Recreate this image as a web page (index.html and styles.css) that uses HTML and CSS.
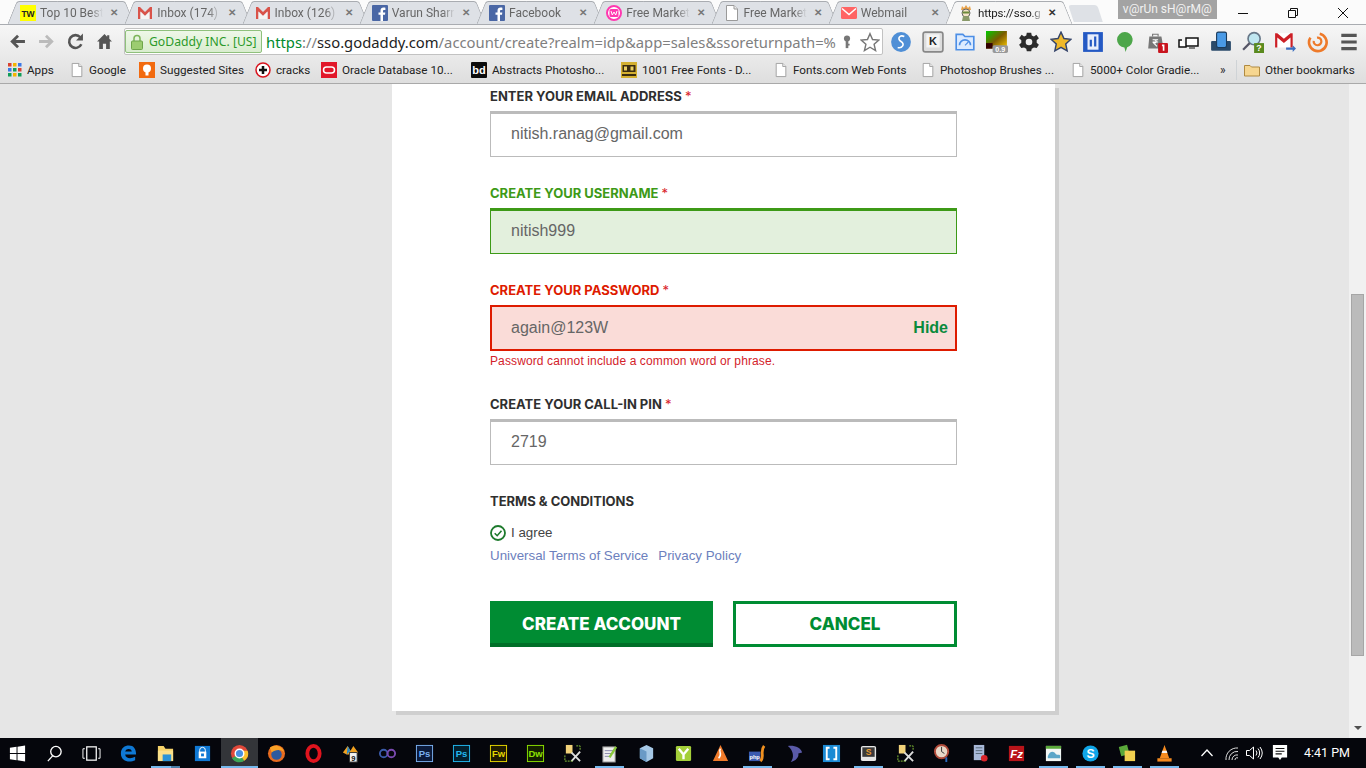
FILE: index.html
```html
<!DOCTYPE html>
<html lang="en">
<head>
    <meta charset="UTF-8">
    <meta name="viewport" content="width=device-width, initial-scale=1.0">
    <title>Create Account</title>
    <link rel="stylesheet" href="styles.css">
</head>
<body>
    <svg class="sprites" width="0" height="0">
        <symbol id="doc" viewBox="0 0 16 16"><path d="M2.5 .5H10L13.5 4V15.5H2.500Z" fill="#fff" stroke="#9a9a9a"/><path d="M10 .5V4H13.500" fill="#eee" stroke="#9a9a9a"/></symbol>
        <symbol id="gmail" viewBox="0 0 16 16"><path d="M1 2H3L8 7 13 2H15V14H12.500V6.500L8 11 3.500 6.500V14H1Z" fill="#d9534a"/><path d="M3.500 6.500V14H12.500V6.500L8 11Z" fill="#f4f4f4"/></symbol>
        <symbol id="fb" viewBox="0 0 16 16"><rect width="16" height="16" rx="1" fill="#4a67a5"/><path d="M11 16V9.800H13L13.300 7.400H11V6C11 5.300 11.300 4.900 12.100 4.900H13.400V2.700C13 2.600 12.300 2.600 11.500 2.600 9.700 2.600 8.500 3.700 8.500 5.700V7.400H6.500V9.800H8.500V16Z" fill="#fff"/></symbol>
    </svg>

    <div class="browser">
        <!-- tabs -->
        <div class="tabstrip">
            <div class="tab"><svg class="favicon" viewBox="0 0 16 16"><rect width="16" height="16" fill="#ff0"/><text x="8" y="11.500" text-anchor="middle" class="tw">TW</text></svg><span class="tab-title">Top 10 Best</span><span class="tab-x">✕</span></div>
            <div class="tab"><svg class="favicon"><use href="#gmail"/></svg><span class="tab-title">Inbox (174)</span><span class="tab-x">✕</span></div>
            <div class="tab"><svg class="favicon"><use href="#gmail"/></svg><span class="tab-title">Inbox (126)</span><span class="tab-x">✕</span></div>
            <div class="tab"><svg class="favicon"><use href="#fb"/></svg><span class="tab-title">Varun Sharr</span><span class="tab-x">✕</span></div>
            <div class="tab"><svg class="favicon"><use href="#fb"/></svg><span class="tab-title">Facebook</span><span class="tab-x">✕</span></div>
            <div class="tab"><svg class="favicon" viewBox="0 0 16 16"><circle cx="8" cy="8" r="7" fill="#fff" stroke="#ff38b0" stroke-width="2"/><rect x="3.500" y="4" width="9" height="8" rx="1.500" fill="#ff38b0"/><path d="M5 6 6.300 10 8 7 9.700 10 11 6" fill="none" stroke="#fff"/></svg><span class="tab-title">Free Market</span><span class="tab-x">✕</span></div>
            <div class="tab"><svg class="favicon"><use href="#doc"/></svg><span class="tab-title">Free Market</span><span class="tab-x">✕</span></div>
            <div class="tab"><svg class="favicon" viewBox="0 0 16 16"><rect y="2" width="16" height="12" rx="1.500" fill="#ff6464"/><path d="M1 3.500 8 9.500 15 3.500" fill="none" stroke="#fff" stroke-width="1.500"/></svg><span class="tab-title">Webmail</span><span class="tab-x">✕</span></div>
            <div class="tab tab-active"><svg class="favicon" viewBox="0 0 16 16"><path d="M3 5 4 1 6 3 8 0 10 3 12 1 13 5Z" fill="#e8a24a"/><circle cx="8" cy="8" r="4" fill="#f3e3c8" stroke="#666"/><rect x="4.500" y="6.500" width="7" height="2" fill="#6a8a3a"/><path d="M5 11 4 16H12L11 11Z" fill="#8a9a6a"/></svg><span class="tab-title">https://sso.g</span><span class="tab-x">✕</span></div>
            <div class="new-tab"></div>
            <div class="profile">v@rUn sH@rM@</div>
            <div class="win-controls">
                <svg class="win-btn" viewBox="0 0 12 12"><path d="M1 6.500H11" stroke="#111"/></svg>
                <svg class="win-btn" viewBox="0 0 12 12"><path d="M1.500 3.500H8.500V10.500H1.500Z M3.500 3.500V1.500H10.500V8.500H8.500" fill="none" stroke="#111"/></svg>
                <svg class="win-btn" viewBox="0 0 12 12"><path d="M1 1 11 11M11 1 1 11" stroke="#111"/></svg>
            </div>
        </div>

        <!-- address bar -->
        <div class="toolbar">
            <div class="nav-btn"><svg viewBox="0 0 16 16"><path d="M15 8H4M8.500 2.500 3 8 8.500 13.500" fill="none" stroke="#555" stroke-width="2.600"/></svg></div>
            <div class="nav-btn"><svg viewBox="0 0 16 16"><path d="M1 8H12M7.500 2.500 13 8 7.500 13.500" fill="none" stroke="#bbb" stroke-width="2.600"/></svg></div>
            <div class="nav-btn"><svg viewBox="0 0 16 16"><path d="M13.500 10.500A6 6 0 1 1 12.500 4" fill="none" stroke="#555" stroke-width="2.400"/><path d="M15 .5V7H8.500Z" fill="#555"/></svg></div>
            <div class="nav-btn"><svg viewBox="0 0 16 16"><path d="M8 1 1 8H3V15H6.500V10H9.500V15H13V8H15L12.500 5.500V2H10.500V3.500Z" fill="#555"/></svg></div>
            <div class="omnibox">
                <div class="ev-chip">
                    <svg class="ev-lock" viewBox="0 0 12 16"><path d="M3 8V4.500A3 3 0 0 1 9 4.500V8" fill="none" stroke="#7cb45a" stroke-width="1.500"/><rect x=".5" y="7" width="11" height="8.500" rx="1" fill="#9ccc70" stroke="#6ea54a"/></svg>
                    <span>GoDaddy INC. [US]</span>
                </div>
                <div class="url"><span class="url-scheme">https</span>://<span class="url-host">sso.godaddy.com</span>/account/create?realm=idp&amp;app=sales&amp;ssoreturnpath=%</div>
                <svg class="omni-icon" viewBox="0 0 16 16"><circle cx="8" cy="4" r="3.500" fill="#777"/><rect x="6.500" y="6" width="3" height="9" fill="#777"/><rect x="9" y="10" width="2" height="2" fill="#777"/></svg>
                <svg class="omni-icon omni-star" viewBox="0 0 18 18"><path d="M9 1.500 11.300 6.800 17 7.300 12.700 11.100 14 16.700 9 13.700 4 16.700 5.300 11.100 1 7.300 6.700 6.800Z" fill="#fff" stroke="#777" stroke-width="1.300"/></svg>
            </div>
            <div class="extensions">
                <div class="ext"><svg viewBox="0 0 20 20"><circle cx="10" cy="10" r="9" fill="#4f8fd6"/><path d="M13 5C9 3 6 7 10 9.500S11 16 7 15" fill="none" stroke="#fff" stroke-width="1.500"/></svg></div>
                <div class="ext"><svg viewBox="0 0 20 20"><rect x="1" y="1" width="18" height="18" rx="2" fill="#ddd" stroke="#888" stroke-width="1.500"/><rect x="4" y="3" width="12" height="12" fill="#f4f4f4"/><text x="10" y="13" text-anchor="middle" class="ext-k">K</text></svg></div>
                <div class="ext"><svg viewBox="0 0 20 20"><path d="M2 3H8L10 5H18V17H2Z" fill="#dcebff" stroke="#4d8fe6" stroke-width="1.500"/><path d="M5 13A5 5 0 0 1 15 13" fill="none" stroke="#4d8fe6" stroke-width="1.500"/><path d="M10 13 13 10" stroke="#4d8fe6"/></svg></div>
                <div class="ext"><svg viewBox="0 0 20 20"><defs><linearGradient id="cg" x1="0" y1="0" x2="1" y2="1"><stop offset="0" stop-color="#0c0"/><stop offset=".5" stop-color="#7a5a00"/><stop offset="1" stop-color="#fc0"/></linearGradient></defs><rect y="0" width="19" height="16" fill="url(#cg)"/><rect x="0" y="11" width="6" height="5" fill="#300"/><rect x="6" y="13" width="14" height="7" rx="1.500" fill="#999"/><text x="13" y="19" text-anchor="middle" class="ext-num">0.9</text></svg></div>
                <div class="ext"><svg viewBox="0 0 20 20"><path d="M8 1H12L12.500 3.500 14.500 4.400 16.700 3 19 6 17 7.800V10.200L19 12 17 15 14.500 14.600 12.500 15.700 12 18H8L7.500 15.700 5.500 14.600 3 15 1 12 3 10.200V7.800L1 6 3.300 3 5.500 4.400 7.500 3.500Z" fill="#2b2b2b" transform="translate(0 .5)"/><circle cx="10" cy="10" r="3" fill="#eee"/></svg></div>
                <div class="ext"><svg viewBox="0 0 20 20"><path d="M10 1 12.700 6.800 19 7.500 14.300 11.800 15.600 18 10 14.900 4.400 18 5.700 11.800 1 7.500 7.300 6.800Z" fill="#f0b92a" stroke="#34446a" stroke-width="1.300"/></svg></div>
                <div class="ext"><svg viewBox="0 0 20 20"><rect x="1" y="1" width="18" height="18" fill="#2459c4"/><rect x="5" y="3" width="10" height="14" fill="#e8eefc"/><path d="M8 14V8M12 5V14" stroke="#2459c4" stroke-width="2"/></svg></div>
                <div class="ext"><svg viewBox="0 0 20 20"><path d="M10 1A7 7 0 0 1 12 14.700L10.500 19 9.500 15A7 7 0 0 1 10 1Z" fill="#4da64a"/></svg></div>
                <div class="ext"><svg viewBox="0 0 20 20"><path d="M3 5H14L16 16H2Z" fill="#777"/><path d="M6 5V3H11V5" fill="none" stroke="#777"/><path d="M6 8H11M6 10H11M7 8C10 8 10 11 7 11L10 14" fill="none" stroke="#fff"/><rect x="11" y="11" width="9" height="9" rx="1" fill="#c8141e"/><path d="M14.500 13H16V18" fill="none" stroke="#fff" stroke-width="1.500"/></svg></div>
                <div class="ext"><svg viewBox="0 0 22 20"><path d="M4 8H1V15H8V6H20V14H8" fill="#fff" stroke="#111" stroke-width="1.500"/><path d="M11 16H17" stroke="#111"/></svg></div>
                <div class="ext"><svg viewBox="0 0 20 20"><rect x="1" y="9" width="18" height="9" rx="1" fill="#2a4a6a"/><rect x="6" y="1" width="9" height="14" rx="1.500" fill="#4a9ae6" stroke="#1a3a5a"/></svg></div>
                <div class="ext"><svg viewBox="0 0 20 20"><circle cx="11" cy="7" r="5.500" fill="#bfe6f0" stroke="#678" stroke-width="1.500"/><path d="M7 11 1 17" stroke="#556" stroke-width="2"/><rect x="11" y="11" width="9" height="9" fill="#5a8a1e"/><text x="15.500" y="18.500" text-anchor="middle" class="ext-q">?</text></svg></div>
                <div class="ext"><svg viewBox="0 0 20 20"><rect x="1" y="2" width="16" height="13" fill="#fff"/><path d="M1 2H3L9 7 15 2H17V15H15V6L9 11 3 6V15H1Z" fill="#cc1f26"/><path d="M11 15H17V13L20 16 17 19V17H11Z" fill="#3a6ec0"/></svg></div>
                <div class="ext"><svg viewBox="0 0 20 20"><path d="M12.500 2.500A8 8 0 1 1 4 6" fill="none" stroke="#ee7a2a" stroke-width="2.400"/><path d="M7 9A3.500 3.500 0 1 0 10 6" fill="none" stroke="#ee7a2a" stroke-width="2"/></svg></div>
                <div class="ext"><svg viewBox="0 0 20 20"><path d="M3 4H17M3 10H17M3 16H17" stroke="#555" stroke-width="2.800"/></svg></div>
            </div>
        </div>

        <!-- bookmarks -->
        <div class="bookmarks">
            <div class="bm"><svg class="bm-icon" viewBox="0 0 14 14"><g fill="#d9412f"><rect width="3.500" height="3.500"/><rect x="10" width="3.500" height="3.500" fill="#3b78e7"/><rect x="5" width="3.500" height="3.500" fill="#f4b400"/><rect y="5" width="3.500" height="3.500" fill="#3b78e7"/><rect x="5" y="5" width="3.500" height="3.500" fill="#0f9d58"/><rect x="10" y="5" width="3.500" height="3.500"/><rect y="10" width="3.500" height="3.500" fill="#0f9d58"/><rect x="5" y="10" width="3.500" height="3.500" fill="#f4b400"/><rect x="10" y="10" width="3.500" height="3.500" fill="#0f9d58"/></g></svg>Apps</div>
            <div class="bm"><svg class="bm-icon"><use href="#doc"/></svg>Google</div>
            <div class="bm"><svg class="bm-icon bm-wide" viewBox="0 0 16 16"><rect width="16" height="16" fill="#f26a0f"/><circle cx="8" cy="6.500" r="4" fill="#fff"/><rect x="6.500" y="10" width="3" height="3.500" fill="#fff"/></svg>Suggested Sites</div>
            <div class="bm"><svg class="bm-icon bm-wide" viewBox="0 0 16 16"><circle cx="8" cy="8" r="7" fill="#fff" stroke="#d8141e" stroke-width="1.500"/><path d="M8 4V12M4 8H12" stroke="#111" stroke-width="2.500"/></svg>cracks</div>
            <div class="bm"><svg class="bm-icon bm-wide" viewBox="0 0 16 16"><rect width="16" height="16" fill="#e2172a"/><rect x="2.500" y="5" width="11" height="6" rx="3" fill="none" stroke="#fff" stroke-width="1.500"/></svg>Oracle Database 10...</div>
            <div class="bm"><svg class="bm-icon bm-wide" viewBox="0 0 16 16"><rect width="16" height="16" rx="1" fill="#0c0c0c"/><text x="8" y="12" text-anchor="middle" class="bd">bd</text></svg>Abstracts Photosho...</div>
            <div class="bm"><svg class="bm-icon bm-wide" viewBox="0 0 16 16"><rect width="16" height="16" fill="#d4b030"/><rect x="1.500" y="3" width="13" height="7" fill="#3a2c10"/><rect x="3" y="4.500" width="3" height="4" fill="#ecd060"/><rect x="9.500" y="4.500" width="3" height="4" fill="#ecd060"/><rect x="1" y="12" width="14" height="2" fill="#3a2c10"/></svg>1001 Free Fonts - D...</div>
            <div class="bm"><svg class="bm-icon"><use href="#doc"/></svg>Fonts.com Web Fonts</div>
            <div class="bm"><svg class="bm-icon"><use href="#doc"/></svg>Photoshop Brushes ...</div>
            <div class="bm"><svg class="bm-icon"><use href="#doc"/></svg>5000+ Color Gradie...</div>
            <div class="bm-more">»</div>
            <div class="bm-sep"></div>
            <div class="bm"><svg class="bm-icon bm-wide" viewBox="0 0 16 16"><path d="M.5 3.500H6L7.500 5H15.500V14H.5Z" fill="#f6d690" stroke="#b08a40"/></svg>Other bookmarks</div>
        </div>

        <!-- page -->
        <div class="viewport">
            <main class="page">
                <form class="card">
                    <div class="field">
                        <label class="field-label">ENTER YOUR EMAIL ADDRESS <span class="req">*</span></label>
                        <div class="field-box">nitish.ranag@gmail.com</div>
                    </div>
                    <div class="field is-valid">
                        <label class="field-label">CREATE YOUR USERNAME <span class="req">*</span></label>
                        <div class="field-box">nitish999</div>
                    </div>
                    <div class="field is-error">
                        <label class="field-label">CREATE YOUR PASSWORD <span class="req">*</span></label>
                        <div class="field-box">again@123W<span class="hide-link">Hide</span></div>
                        <div class="field-error">Password cannot include a common word or phrase.</div>
                    </div>
                    <div class="field">
                        <label class="field-label">CREATE YOUR CALL-IN PIN <span class="req">*</span></label>
                        <div class="field-box">2719</div>
                    </div>
                    <div class="terms">
                        <div class="field-label">TERMS &amp; CONDITIONS</div>
                        <div class="agree">
                            <svg class="check" viewBox="0 0 16 16"><circle cx="8" cy="8" r="7" fill="#fff" stroke="#1d7a2c" stroke-width="1.800"/><path d="M4.700 8.200 7.200 10.700 11.500 5.800" fill="none" stroke="#1d7a2c" stroke-width="1.600"/></svg>
                            I agree
                        </div>
                        <div class="terms-links"><a>Universal Terms of Service</a><a>Privacy Policy</a></div>
                    </div>
                    <div class="actions">
                        <div class="btn btn-primary">CREATE ACCOUNT</div>
                        <div class="btn btn-outline">CANCEL</div>
                    </div>
                </form>
            </main>
            <div class="scrollbar">
                <div class="scroll-thumb"></div>
                <div class="scroll-down"></div>
            </div>
        </div>

        <!-- windows taskbar -->
        <footer class="taskbar">
            <div class="task"><svg viewBox="0 0 20 20"><path d="M2 4 9 3V9.500H2ZM10 2.800 18 1.500V9.500H10ZM2 10.500H9V17L2 16ZM10 10.500H18V18.500L10 17.200Z" fill="#fff"/></svg></div>
            <div class="task"><svg viewBox="0 0 20 20"><circle cx="11.500" cy="8" r="5.500" fill="none" stroke="#fff" stroke-width="1.400"/><path d="M8 12.500 3 18" stroke="#fff" stroke-width="1.400"/></svg></div>
            <div class="task"><svg viewBox="0 0 20 20"><rect x="5" y="3" width="10" height="14" fill="none" stroke="#fff" stroke-width="1.300"/><path d="M3 5H1V15H3M17 5H19V15H17" fill="none" stroke="#fff"/></svg></div>
            <div class="task"><svg viewBox="0 0 20 20"><path d="M2 10C2 4 6 1.500 10.500 1.500 15.500 1.500 18 5 18 11H6.500C7 15.500 12.500 16 17 13.500V17C11 20 2 18.500 2 10ZM6.500 8H13.500C13 4.500 7.500 4.500 6.500 8Z" fill="#0f78d4"/></svg></div>
            <div class="task task-open task-split"><svg viewBox="0 0 20 20"><path d="M2 2H8L10 5H18V18H2Z" fill="#f6d26a"/><rect x="2" y="7" width="16" height="11" fill="#fbe08a"/><rect x="7" y="11" width="9" height="7" fill="#2a93d8"/></svg></div>
            <div class="task"><svg viewBox="0 0 20 20"><rect x="2" y="2" width="16" height="16" fill="#0f78d4"/><path d="M7 9V6.500A3 3 0 0 1 13 6.500V9" fill="none" stroke="#fff"/><rect x="6" y="8" width="8" height="7" fill="#fff"/><rect x="8.500" y="10" width="3" height="3" fill="#0f78d4"/></svg></div>
            <div class="task task-active"><svg viewBox="0 0 20 20"><circle cx="10" cy="10" r="9" fill="#e0483a"/><path d="M10 10 2 15A9 9 0 0 0 15 17.500Z" fill="#3aa757"/><path d="M10 10 15 17.500A9 9 0 0 0 18.500 7H10Z" fill="#fbc02d"/><circle cx="10" cy="10" r="4.500" fill="#4a90e2" stroke="#fff" stroke-width="1.500"/></svg></div>
            <div class="task"><svg viewBox="0 0 20 20"><circle cx="10" cy="10" r="9" fill="#e86b1f"/><circle cx="10" cy="11" r="5.500" fill="#2c5aa0"/><path d="M3 4C8 0 17 2 18 9 15 5 8 6 5 9Z" fill="#f9a227"/></svg></div>
            <div class="task"><svg viewBox="0 0 20 20"><ellipse cx="10" cy="10" rx="6.500" ry="8" fill="none" stroke="#e0141e" stroke-width="4"/></svg></div>
            <div class="task"><svg viewBox="0 0 20 20"><path d="M2 9 7 2 10 7 13 2 18 9 14 11H6Z" fill="#f0a020"/><path d="M7 2 10 7 6 11Z" fill="#2a8ac8"/><rect x="9" y="9" width="8" height="10" fill="#f2f2f2" stroke="#333"/><text x="13" y="17.500" text-anchor="middle" class="tile-num">9</text></svg></div>
            <div class="task"><svg viewBox="0 0 20 20"><circle cx="6" cy="10" r="4" fill="none" stroke="#3a5aa8" stroke-width="2"/><circle cx="14" cy="10" r="4" fill="none" stroke="#7a4ab0" stroke-width="2"/></svg></div>
            <div class="task"><svg viewBox="0 0 20 20"><rect x="1.500" y="1.500" width="17" height="17" fill="#0b1a3a" stroke="#7ab0f0"/><text x="10" y="14" text-anchor="middle" class="tile-ps">Ps</text></svg></div>
            <div class="task"><svg viewBox="0 0 20 20"><rect x="1.500" y="1.500" width="17" height="17" fill="#03202e" stroke="#22b8f0"/><text x="10" y="14" text-anchor="middle" class="tile-ps2">Ps</text></svg></div>
            <div class="task"><svg viewBox="0 0 20 20"><rect x="1.500" y="1.500" width="17" height="17" fill="#201c00" stroke="#e6d800"/><text x="10" y="14" text-anchor="middle" class="tile-fw">Fw</text></svg></div>
            <div class="task"><svg viewBox="0 0 20 20"><rect x="1.500" y="1.500" width="17" height="17" fill="#142000" stroke="#8ce000"/><text x="10" y="14" text-anchor="middle" class="tile-dw">Dw</text></svg></div>
            <div class="task"><svg viewBox="0 0 20 20"><rect x="3" y="1" width="7" height="9" fill="#f2d27a"/><path d="M9 9 18 18M18 8 9 18" stroke="#ddd" stroke-width="2"/><path d="M2 18H10M2 12V18M14 2H18V6" fill="none" stroke="#8ac83a" stroke-dasharray="2 1"/></svg></div>
            <div class="task task-open"><svg viewBox="0 0 20 20"><rect x="3" y="3" width="13" height="16" fill="#eee" stroke="#888"/><path d="M5 7H14M5 10H14M5 13H11" stroke="#88a"/><path d="M10 14 17 3" stroke="#8ac83a" stroke-width="2.500"/></svg></div>
            <div class="task"><svg viewBox="0 0 20 20"><path d="M10 1 17 4.500V15L10 19 3 15V4.500Z" fill="#a6c8e6"/><path d="M10 8V19L3 15V4.500Z" fill="#6a9ac6"/></svg></div>
            <div class="task"><svg viewBox="0 0 20 20"><rect x="2" y="2" width="16" height="16" rx="1.500" fill="#a4cf3a"/><path d="M5 5 10 11 15 5M10 11V16" stroke="#fff" stroke-width="2.500" fill="none"/></svg></div>
            <div class="task"><svg viewBox="0 0 20 20"><path d="M10 1 18 18H2Z" fill="#f07a2a"/><path d="M10 5C7 8 13 10 8 15" fill="none" stroke="#fff" stroke-width="1.600"/></svg></div>
            <div class="task task-open"><svg viewBox="0 0 20 20"><rect x="1" y="8" width="12" height="10" fill="#3a5ab0"/><text x="7" y="16" text-anchor="middle" class="tile-php">php</text><path d="M13 18C18 14 12 8 17 2" fill="none" stroke="#f09020" stroke-width="3"/></svg></div>
            <div class="task"><svg viewBox="0 0 20 20"><path d="M3 2C10 1 17 4 18 9L14 10C15 14 11 18 6 19 10 14 9 7 3 2Z" fill="#5a5aa8"/></svg></div>
            <div class="task"><svg viewBox="0 0 20 20"><rect x="1" y="1" width="18" height="18" fill="#1a8ad4"/><path d="M8 4H5V16H8M12 4H15V16H12" fill="none" stroke="#fff" stroke-width="2"/></svg></div>
            <div class="task task-open"><svg viewBox="0 0 20 20"><rect x="2" y="2" width="16" height="16" rx="2" fill="#e6e6e6"/><rect x="3.500" y="3.500" width="13" height="10" fill="#3a3a3a"/><text x="10" y="12" text-anchor="middle" class="tile-s">S</text></svg></div>
            <div class="task"><svg viewBox="0 0 20 20"><rect x="3" y="1" width="7" height="9" fill="#f2d27a"/><path d="M9 9 18 18M18 8 9 18" stroke="#ddd" stroke-width="2"/><path d="M2 18H10M2 12V18M14 2H18V6" fill="none" stroke="#8ac83a" stroke-dasharray="2 1"/></svg></div>
            <div class="task"><svg viewBox="0 0 20 20"><circle cx="9" cy="8" r="7" fill="#e8d8c8" stroke="#b04a3a" stroke-width="2"/><path d="M9 3V8L12 10" stroke="#333" fill="none"/><path d="M14 14V19" stroke="#2a6ac0" stroke-width="2"/></svg></div>
            <div class="task"><svg viewBox="0 0 20 20"><rect x="4" y="1" width="11" height="16" fill="#a8b8d8"/><path d="M6 4H13M6 7H13M6 10H13" stroke="#567"/><circle cx="15" cy="15" r="3.500" fill="#d8242a"/></svg></div>
            <div class="task"><svg viewBox="0 0 20 20"><rect x="2" y="2" width="16" height="16" fill="#b8141a"/><text x="10" y="15" text-anchor="middle" class="tile-fz">Fz</text></svg></div>
            <div class="task task-open"><svg viewBox="0 0 20 20"><rect x="2" y="2" width="16" height="16" fill="#f2f6f4"/><rect x="2" y="2" width="16" height="3" fill="#5aa83a"/><path d="M4 13C6 7 10 7 12 10S16 10 17 12V15H4Z" fill="#5aa6c8"/></svg></div>
            <div class="task task-open"><svg viewBox="0 0 20 20"><circle cx="10" cy="10" r="8.500" fill="#10a5e8"/><text x="10" y="14.500" text-anchor="middle" class="tile-sk">S</text></svg></div>
            <div class="task task-open"><svg viewBox="0 0 20 20"><rect x="2" y="2" width="9" height="10" fill="#5aa83a" transform="rotate(-15 6 7)"/><rect x="7" y="7" width="11" height="11" fill="#f2d050"/></svg></div>
            <div class="task task-open"><svg viewBox="0 0 20 20"><path d="M10 1 15 15H5Z" fill="#f58a1f"/><path d="M7.700 7H12.300L13 9.500H7Z" fill="#f4f4f4"/><rect x="2.500" y="15" width="15" height="3.500" fill="#f58a1f"/></svg></div>
            <div class="tray">
                <svg class="tray-caret" viewBox="0 0 14 14"><path d="M1.500 10 7 4 12.500 10" fill="none" stroke="#fff" stroke-width="1.300"/></svg>
                <svg class="tray-icon tray-wifi" viewBox="0 0 18 18"><path d="M3 16A11 11 0 0 1 15 4M6 16A8 8 0 0 1 15 7.500M9 16A5 5 0 0 1 15 11M12 16A2 2 0 0 1 15 14" fill="none" stroke="#ddd"/></svg>
                <svg class="tray-icon tray-vol" viewBox="0 0 18 18"><path d="M1.500 6.500H4.500L8.500 3V15L4.500 11.500H1.500Z" fill="none" stroke="#fff"/><path d="M11 6.500A4 4 0 0 1 11 11.500M13 4.500A7 7 0 0 1 13 13.500M15 3A10 10 0 0 1 15 15" fill="none" stroke="#fff"/></svg>
                <svg class="tray-note" viewBox="0 0 18 20"><path d="M1 1H17V15H11L9 18 7 15H1Z" fill="#fff"/><path d="M4 5H14M4 8H14M4 11H11" stroke="#111" stroke-width="1.200"/></svg>
                <div class="clock">4:41 PM</div>
            </div>
        </footer>
    </div>
</body>
</html>
```

FILE: styles.css
```css
* {
    box-sizing: border-box;
}

body {
    margin: 0;
    font-family: "Liberation Sans", Arial, sans-serif;
    background-color: #e6e6e6;
}

.sprites {
    position: absolute;
}

.browser {
    display: flex;
    flex-direction: column;
    width: 1366px;
    height: 768px;
    overflow: hidden;
}

/* tabs */
.tabstrip {
    display: flex;
    align-items: flex-end;
    height: 24px;
    padding-left: 10px;
    background-color: #fbfbfb;
    flex-shrink: 0;
}

.tab {
    position: relative;
    display: flex;
    align-items: center;
    flex-shrink: 0;
    width: 121.250px;
    height: 23px;
    margin-right: -4px;
    padding: 0 9px 0 10px;
    font-family: Roboto, sans-serif;
    font-size: 12px;
    color: #666;
    z-index: 1;
}

.tab::before,
.tab::after {
    content: "";
    position: absolute;
    top: 0;
    bottom: 0;
    width: 55%;
    background-color: #dee1e6;
    border-top: 1px solid #a9acb1;
    z-index: -1;
}

.tab::before {
    left: 2px;
    border-left: 1px solid #a9acb1;
    border-top-left-radius: 3px;
    transform: skewX(-22deg);
}

.tab::after {
    right: 2px;
    border-right: 1px solid #a9acb1;
    border-top-right-radius: 3px;
    transform: skewX(22deg);
}

.tab-active {
    color: #222;
    font-size: 11.500px;
    letter-spacing: -.2px;
    z-index: 2;
}

.tab-active::before,
.tab-active::after {
    background-color: #f6f6f6;
}

.favicon {
    width: 16px;
    height: 16px;
    flex-shrink: 0;
}

.tab-title {
    flex: 1;
    margin-left: 4px;
    overflow: hidden;
    white-space: nowrap;
    -webkit-mask-image: linear-gradient(to right, #000 80%, transparent 100%);
    mask-image: linear-gradient(to right, #000 80%, transparent 100%);
}

.tab-x {
    width: 16px;
    margin-left: 3px;
    font-size: 10px;
    font-weight: 700;
    color: #777;
    text-align: center;
}

.tab-active .tab-x {
    margin-left: 0;
    color: #333;
}

.new-tab {
    width: 30px;
    height: 17px;
    margin: 0 0 2px 6px;
    background-color: #dee1e6;
    border-radius: 3px 3px 0 0;
    transform: skewX(18deg);
}

.profile {
    align-self: flex-start;
    width: 102px;
    height: 19px;
    margin-left: 17px;
    background-color: #a3a3a3;
    color: #f2f2f2;
    font-family: Roboto, sans-serif;
    font-size: 12px;
    line-height: 18px;
    text-align: center;
}

.win-controls {
    display: flex;
    align-self: flex-start;
    margin-left: 3px;
}

.win-btn {
    width: 12px;
    height: 12px;
    margin: 7px 17px 0 17px;
}

.win-btn + .win-btn {
    margin-left: 21px;
}

/* address bar */
.toolbar {
    display: flex;
    align-items: center;
    height: 34px;
    padding-left: 3px;
    border-top: 1px solid #a9acb1;
    background: linear-gradient(#f6f6f6, #e9e9e9);
    flex-shrink: 0;
}

.nav-btn {
    display: flex;
    align-items: center;
    justify-content: center;
    flex-shrink: 0;
    width: 29px;
    height: 24px;
}

.nav-btn svg {
    width: 17px;
    height: 17px;
}

.omnibox {
    display: flex;
    align-items: center;
    flex-shrink: 0;
    width: 759px;
    height: 27px;
    margin-left: 5px;
    background-color: #fff;
    border: 1px solid #c2c2c2;
    border-radius: 2px;
}

.ev-chip {
    display: flex;
    align-items: center;
    flex-shrink: 0;
    gap: 6px;
    width: 137px;
    height: 23px;
    padding-left: 5px;
    background: linear-gradient(#eef7e8, #d9edcf);
    border: 1px solid #8fc07c;
    border-radius: 2px;
    color: #2c9a2a;
    font-family: "Noto Sans", sans-serif;
    font-size: 12.200px;
    white-space: nowrap;
}

.ev-lock {
    width: 12px;
    height: 16px;
}

.url {
    flex: 1;
    margin-left: 4px;
    overflow: hidden;
    white-space: nowrap;
    font-family: "Noto Sans", sans-serif;
    font-size: 14.800px;
    color: #808080;
}

.url-scheme {
    color: #00892d;
}

.url-host {
    color: #222;
}

.omni-icon {
    width: 14px;
    height: 16px;
    margin: 0 4px;
    flex-shrink: 0;
}

.omni-star {
    width: 20px;
    height: 20px;
    margin: 0 2px 0 2px;
}

.extensions {
    display: flex;
    margin-left: 2px;
}

.ext {
    display: flex;
    align-items: center;
    justify-content: center;
    flex-shrink: 0;
    width: 32px;
}

.ext svg {
    width: 22px;
    height: 22px;
}

.ext-k {
    font: 700 10px "Liberation Sans", sans-serif;
    fill: #222;
}

.ext-num {
    font: 700 6.500px "Liberation Sans", sans-serif;
    fill: #fff;
}

.ext-q {
    font: 700 8px "Liberation Sans", sans-serif;
    fill: #fff;
}

/* bookmarks */
.bookmarks {
    display: grid;
    grid-template-columns: 62px 69px 116px 66px 150px 150px 153px 147px 150px 149px 16px 8px auto;
    align-items: center;
    height: 26px;
    padding: 0 0 2px 8px;
    background: linear-gradient(#e9e9e9, #dedede);
    border-bottom: 1px solid #a9a9a9;
    font-family: Roboto, sans-serif;
    font-size: 11.700px;
    color: #222;
    flex-shrink: 0;
}

.bm {
    display: flex;
    align-items: center;
    gap: 5px;
    white-space: nowrap;
    overflow: hidden;
}

.bm-icon {
    width: 14px;
    height: 16px;
    flex-shrink: 0;
}

.bm-wide {
    width: 16px;
}

.bm-more {
    font-size: 12px;
}

.bm-sep {
    width: 1px;
    height: 20px;
    background-color: #cfd3d6;
}

.bd {
    font: 700 11px "Liberation Sans", sans-serif;
    fill: #fff;
}

.tw {
    font: 700 8.500px "Liberation Sans", sans-serif;
    fill: #222;
}

/* page */
.viewport {
    display: flex;
    flex: 1;
    min-height: 0;
}

.page {
    flex: 1;
    padding-left: 392px;
    overflow: hidden;
}

.card {
    width: 663px;
    padding: 0 98px 64px;
    background-color: #fff;
    box-shadow: 4px 4px 0 #cfcfcf;
}

.field {
    margin-bottom: 24px;
}

.field-label {
    display: block;
    margin-bottom: 3px;
    font-family: Inter, sans-serif;
    font-size: 13px;
    font-weight: 700;
    line-height: 24px;
    color: #2f2f2f;
}

.req {
    font-weight: 400;
    color: #d9232a;
}

.field-box {
    display: flex;
    align-items: center;
    justify-content: space-between;
    height: 46px;
    padding: 0 8px 2px 20px;
    background-color: #fff;
    border: 1px solid #bbb;
    border-top-width: 3px;
    font-size: 16px;
    color: #666;
}

.is-valid .field-label {
    color: #3d9a17;
}

.is-valid .field-box {
    background-color: #e3f0dd;
    border-color: #3d9a17;
}

.is-error .field-label {
    color: #de1b00;
}

.is-error .field-box {
    padding: 0 7px 0 19px;
    background-color: #fadcd8;
    border: 2px solid #de1b00;
}

.hide-link {
    font-weight: 700;
    color: #0b8a3c;
}

.field-error {
    margin-bottom: -3px;
    font-size: 12px;
    line-height: 20px;
    letter-spacing: .12px;
    color: #d3222a;
}

.agree {
    display: flex;
    align-items: center;
    gap: 5px;
    margin-top: 9px;
    font-size: 13.330px;
    line-height: 22px;
    color: #444;
}

.check {
    width: 16px;
    height: 16px;
}

.terms-links {
    display: flex;
    gap: 10px;
    margin-top: 1px;
    font-size: 13.330px;
    line-height: 22px;
    color: #6c80bd;
}

.actions {
    display: flex;
    gap: 20px;
    margin-top: 34px;
}

.btn {
    display: flex;
    align-items: center;
    justify-content: center;
    height: 46px;
    font-family: Inter, sans-serif;
    font-size: 17px;
    font-weight: 800;
}

.btn-primary {
    width: 223px;
    background-color: #008c33;
    border-bottom: 4px solid #006f28;
    padding-top: 3px;
    color: #fff;
}

.btn-outline {
    width: 224px;
    background-color: #fff;
    border: 3px solid #008c33;
    color: #008c33;
}

/* scrollbar */
.scrollbar {
    display: flex;
    flex-direction: column;
    align-items: center;
    width: 17px;
    padding-top: 210px;
    background-color: #f1f1f1;
}

.scroll-thumb {
    width: 13px;
    height: 362px;
    background-color: #bbb;
    border: 1px solid #a6a6a6;
}

.scroll-down {
    width: 0;
    height: 0;
    margin-top: 70px;
    border-left: 4px solid transparent;
    border-right: 4px solid transparent;
    border-top: 4px solid #505050;
}

/* windows taskbar */
.taskbar {
    display: flex;
    align-items: center;
    height: 30px;
    padding-bottom: 1px;
    background-color: #05060c;
    flex-shrink: 0;
}

.task {
    position: relative;
    display: flex;
    align-items: center;
    justify-content: center;
    flex-shrink: 0;
    width: 37px;
    height: 30px;
    margin-top: 1px;
}

.task:first-child {
    margin-left: -1px;
}

.task svg {
    width: 19px;
    height: 19px;
}

.task-open::after,
.task-active::after {
    content: "";
    position: absolute;
    left: 4px;
    right: 4px;
    bottom: 0;
    height: 2px;
    background-color: #76b9ed;
}

.task-split::after {
    background: linear-gradient(to right, #76b9ed 70%, #4a7ea8 70%);
}

.task-active {
    background-color: #333539;
}

.task-active::after {
    left: 0;
    right: 0;
}

.tile-ps,
.tile-ps2,
.tile-fw,
.tile-dw {
    font: 700 10px "Liberation Sans", sans-serif;
}

.tile-ps {
    fill: #7ab0f0;
}

.tile-ps2 {
    fill: #22b8f0;
}

.tile-fw {
    fill: #e6d800;
}

.tile-dw {
    fill: #8ce000;
}

.tile-num {
    font: 700 8px "Liberation Sans", sans-serif;
    fill: #111;
}

.tile-php {
    font: 700 6px "Liberation Sans", sans-serif;
    fill: #fff;
}

.tile-s {
    font: 700 9px "Liberation Sans", sans-serif;
    fill: #e89a30;
}

.tile-fz {
    font: italic 700 12px "Liberation Sans", sans-serif;
    fill: #fff;
}

.tile-sk {
    font: 700 13px "Liberation Sans", sans-serif;
    fill: #fff;
}

.tray {
    display: flex;
    align-items: center;
    margin-left: auto;
    color: #fff;
}

.tray-caret {
    width: 14px;
    height: 14px;
}

.tray-icon {
    width: 18px;
    height: 18px;
}

.tray-wifi {
    margin-left: 9px;
}

.tray-vol {
    margin-left: 4px;
}

.tray-note {
    width: 16px;
    height: 20px;
    margin-left: 9px;
}

.clock {
    width: 62px;
    margin-left: 16px;
    font-family: Roboto, sans-serif;
    font-size: 12.500px;
}
```
